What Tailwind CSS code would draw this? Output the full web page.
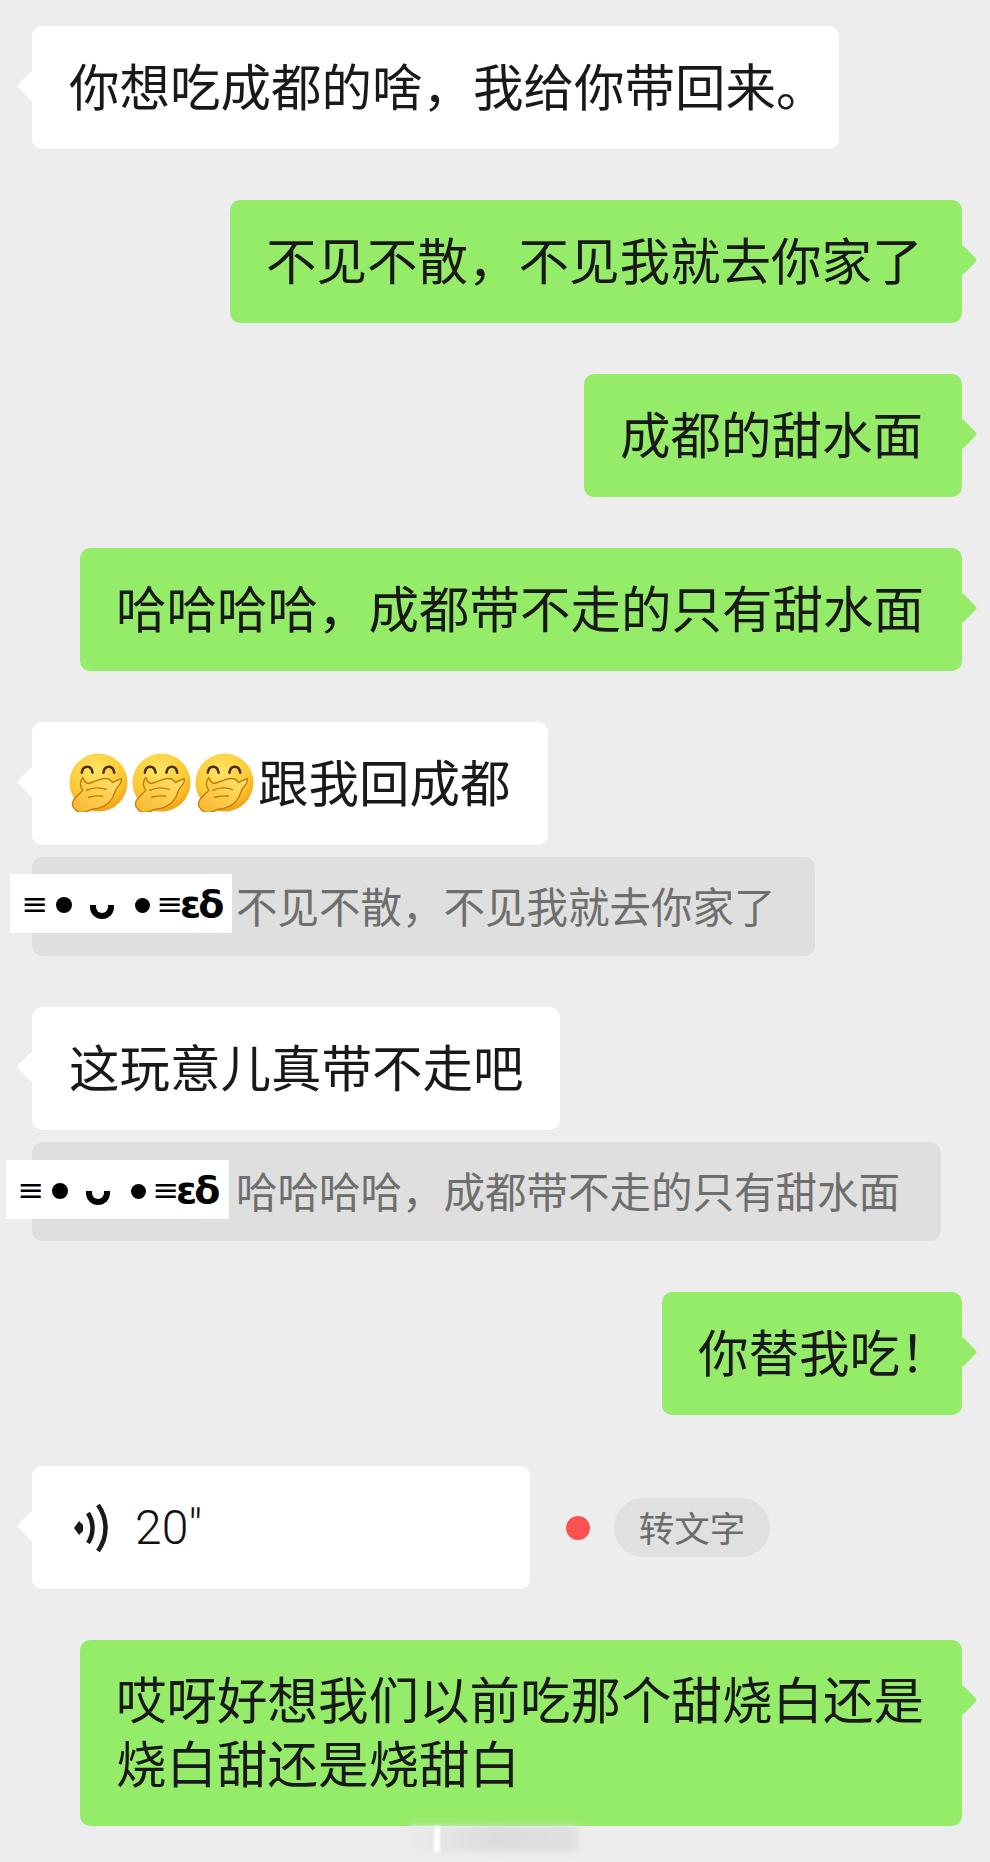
<!DOCTYPE html>
<html lang="zh-CN">
<head>
    <meta charset="UTF-8">
    <meta name="viewport" content="width=device-width, initial-scale=1.0">
    <title>聊天记录</title>
    <script src="https://cdn.jsdelivr.net/npm/@tailwindcss/browser@4"></script>
</head>
<body class="bg-[#ededed]">
    <svg class="absolute w-0 h-0">
        <defs>
            <radialGradient id="face" cx="45%" cy="30%" r="75%">
                <stop offset="0%" stop-color="#ffe566"/>
                <stop offset="65%" stop-color="#fdc832"/>
                <stop offset="100%" stop-color="#f2960f"/>
            </radialGradient>
            <linearGradient id="hand" x1="0" y1="1" x2="1" y2="0">
                <stop offset="0%" stop-color="#fbb62c"/>
                <stop offset="100%" stop-color="#ffe36e"/>
            </linearGradient>
            <symbol id="emoji-shy" viewBox="0 0 60 60">
                <circle cx="30" cy="30" r="29.500" fill="url(#face)"/>
                <path d="M13 20c1-8 10-8 11 0M35 20c1-8 10-8 11 0" fill="none" stroke="#4a2c0a" stroke-width="2.600" stroke-linecap="round"/>
                <path d="M6 57c-4-3-3-8 1-12l7-7c-3-4-3-9 0-13 1 3 3 6 6 6l11-4c6-2 11-1 13 3l9-4c1 3-1 6-4 9-2 3-3 7-5 11-4 7-12 11-20 11l-7 3c-4 1-8 1-11-3z" fill="url(#hand)" stroke="#bf7a0c" stroke-width="1.400" stroke-linejoin="round"/>
                <path d="M18 38c6-3 14-3 20-1M20 45c5-1 10-2 14-1" fill="none" stroke="#bf7a0c" stroke-width="1.400" stroke-linecap="round"/>
            </symbol>
        </defs>
    </svg>

    <main class="relative h-[1862px] overflow-hidden pt-[26px] pl-[32px] pr-[28px] flex flex-col items-start font-['Noto_Sans_CJK_SC','Liberation_Sans',sans-serif] text-[#191919]">

        <div class="relative bg-white rounded-[10px] w-[807px] pt-[27px] pb-[33px] pl-[37px] text-[50.5px] leading-[63px] whitespace-nowrap">
            <span class="absolute left-[-11px] top-[49px] w-[22px] h-[22px] rotate-45 rounded-[3px] bg-white"></span>
            你想吃成都的啥，我给你带回来。
        </div>

        <div class="relative self-end mt-[51px] bg-[#95ec69] rounded-[10px] w-[732px] pt-[27px] pb-[33px] pl-[36px] text-[50.5px] leading-[63px] whitespace-nowrap">
            <span class="absolute right-[-11px] top-[49px] w-[22px] h-[22px] rotate-45 rounded-[3px] bg-[#95ec69]"></span>
            不见不散，不见我就去你家了
        </div>

        <div class="relative self-end mt-[51px] bg-[#95ec69] rounded-[10px] w-[378px] pt-[27px] pb-[33px] pl-[36px] text-[50.5px] leading-[63px] whitespace-nowrap">
            <span class="absolute right-[-11px] top-[49px] w-[22px] h-[22px] rotate-45 rounded-[3px] bg-[#95ec69]"></span>
            成都的甜水面
        </div>

        <div class="relative self-end mt-[51px] bg-[#95ec69] rounded-[10px] w-[882px] pt-[27px] pb-[33px] pl-[36px] text-[50.5px] leading-[63px] whitespace-nowrap">
            <span class="absolute right-[-11px] top-[49px] w-[22px] h-[22px] rotate-45 rounded-[3px] bg-[#95ec69]"></span>
            哈哈哈哈，成都带不走的只有甜水面
        </div>

        <div class="relative mt-[51px] bg-white rounded-[10px] w-[516px] pt-[27px] pb-[33px] pl-[37px] flex items-center text-[50.5px] leading-[63px] whitespace-nowrap">
            <span class="absolute left-[-11px] top-[49px] w-[22px] h-[22px] rotate-45 rounded-[3px] bg-white"></span>
            <span class="w-[63px] flex justify-start shrink-0"><svg class="w-[59px] h-[59px] mt-[3px]"><use href="#emoji-shy"/></svg></span>
            <span class="w-[63px] flex justify-start shrink-0"><svg class="w-[59px] h-[59px] mt-[3px]"><use href="#emoji-shy"/></svg></span>
            <span class="w-[63px] flex justify-start shrink-0"><svg class="w-[59px] h-[59px] mt-[3px]"><use href="#emoji-shy"/></svg></span>
            <span>跟我回成都</span>
        </div>

        <div class="relative mt-[12px] bg-[#dfdfdf] rounded-[10px] w-[783px] h-[99px] pl-[204px] pb-[3px] flex items-center text-[41.5px] text-[#6e6e6e] whitespace-nowrap">
            <div class="absolute left-[-22px] top-[17px] w-[222px] h-[59px] bg-white flex items-center text-black font-['DejaVu_Sans',sans-serif]">
                <span class="ml-[16px] w-[18px] flex justify-center text-[32px] leading-none font-normal">≡</span>
                <span class="ml-[12px] mt-[3px] w-[16px] h-[16px] rounded-full bg-black"></span>
                <span class="ml-[18px] mt-[16px] w-[24px] h-[14px] rounded-b-full border-x-[6px] border-b-[6px] border-black"></span>
                <span class="ml-[21px] mt-[3px] w-[15px] h-[15px] rounded-full bg-black"></span>
                <span class="ml-[11px] w-[18px] flex justify-center text-[32px] leading-none font-normal">≡</span>
                <span class="ml-[1px] text-[38px] leading-none font-bold tracking-[-3px]">εδ</span>
            </div>
            不见不散，不见我就去你家了
        </div>

        <div class="relative mt-[51px] bg-white rounded-[10px] w-[528px] pt-[27px] pb-[33px] pl-[37px] text-[50.5px] leading-[63px] whitespace-nowrap">
            <span class="absolute left-[-11px] top-[49px] w-[22px] h-[22px] rotate-45 rounded-[3px] bg-white"></span>
            这玩意儿真带不走吧
        </div>

        <div class="relative mt-[12px] bg-[#dfdfdf] rounded-[10px] w-[909px] h-[99px] pl-[204px] pb-[3px] flex items-center text-[41.5px] text-[#6e6e6e] whitespace-nowrap">
            <div class="absolute left-[-26px] top-[18px] w-[223px] h-[59px] bg-white flex items-center text-black font-['DejaVu_Sans',sans-serif]">
                <span class="ml-[16px] w-[18px] flex justify-center text-[32px] leading-none font-normal">≡</span>
                <span class="ml-[12px] mt-[3px] w-[16px] h-[16px] rounded-full bg-black"></span>
                <span class="ml-[18px] mt-[16px] w-[24px] h-[14px] rounded-b-full border-x-[6px] border-b-[6px] border-black"></span>
                <span class="ml-[21px] mt-[3px] w-[15px] h-[15px] rounded-full bg-black"></span>
                <span class="ml-[11px] w-[18px] flex justify-center text-[32px] leading-none font-normal">≡</span>
                <span class="ml-[1px] text-[38px] leading-none font-bold tracking-[-3px]">εδ</span>
            </div>
            哈哈哈哈，成都带不走的只有甜水面
        </div>

        <div class="relative self-end mt-[51px] bg-[#95ec69] rounded-[10px] w-[300px] pt-[27px] pb-[33px] pl-[36px] text-[50.5px] leading-[63px] whitespace-nowrap">
            <span class="absolute right-[-11px] top-[49px] w-[22px] h-[22px] rotate-45 rounded-[3px] bg-[#95ec69]"></span>
            你替我吃！
        </div>

        <div class="mt-[51px] flex items-center">
            <div class="relative bg-white rounded-[10px] w-[498px] h-[123px] pl-[42px] flex items-center">
                <span class="absolute left-[-11px] top-[49px] w-[22px] h-[22px] rotate-45 rounded-[3px] bg-white"></span>
                <svg class="w-[36px] h-[48px] shrink-0" viewBox="0 0 36 48" fill="none" stroke="#191919" stroke-width="4.500">
                    <path d="M0 24l5-7 4 4v6l-4 4z" fill="#191919" stroke="none"/>
                    <path d="M14 9c6 9 6 21 0 30"/>
                    <path d="M24 1c10 14 10 32 0 46"/>
                </svg>
                <span class="ml-[25px] text-[48px] text-[#111] font-['Roboto',sans-serif] font-light">20"</span>
            </div>
            <span class="ml-[36px] w-[24px] h-[24px] rounded-full bg-[#fa5151]"></span>
            <span class="ml-[24px] w-[156px] h-[59px] pb-[2px] rounded-full bg-[#e0e0e0] flex items-center justify-center text-[35.500px] text-[#6b6b6b]">转文字</span>
        </div>

        <div class="relative self-end mt-[51px] bg-[#95ec69] rounded-[10px] w-[882px] pt-[25px] pb-[33px] pl-[36px] text-[50.5px] leading-[64px]">
            <span class="absolute right-[-11px] top-[49px] w-[22px] h-[22px] rotate-45 rounded-[3px] bg-[#95ec69]"></span>
            <p class="whitespace-nowrap">哎呀好想我们以前吃那个甜烧白还是</p>
            <p class="whitespace-nowrap">烧白甜还是烧甜白</p>
        </div>

        <!-- watermark smudge under the last bubble -->
        <div class="absolute left-[410px] top-[1826px] w-[168px] h-[26px] blur-[3px] bg-gradient-to-r from-[#ebebeb] via-[#dcdcdc] to-[#e0e0e0]"></div>
        <div class="absolute left-[434px] top-[1826px] w-[6px] h-[26px] blur-[1px] bg-white"></div>
    </main>
</body>
</html>
